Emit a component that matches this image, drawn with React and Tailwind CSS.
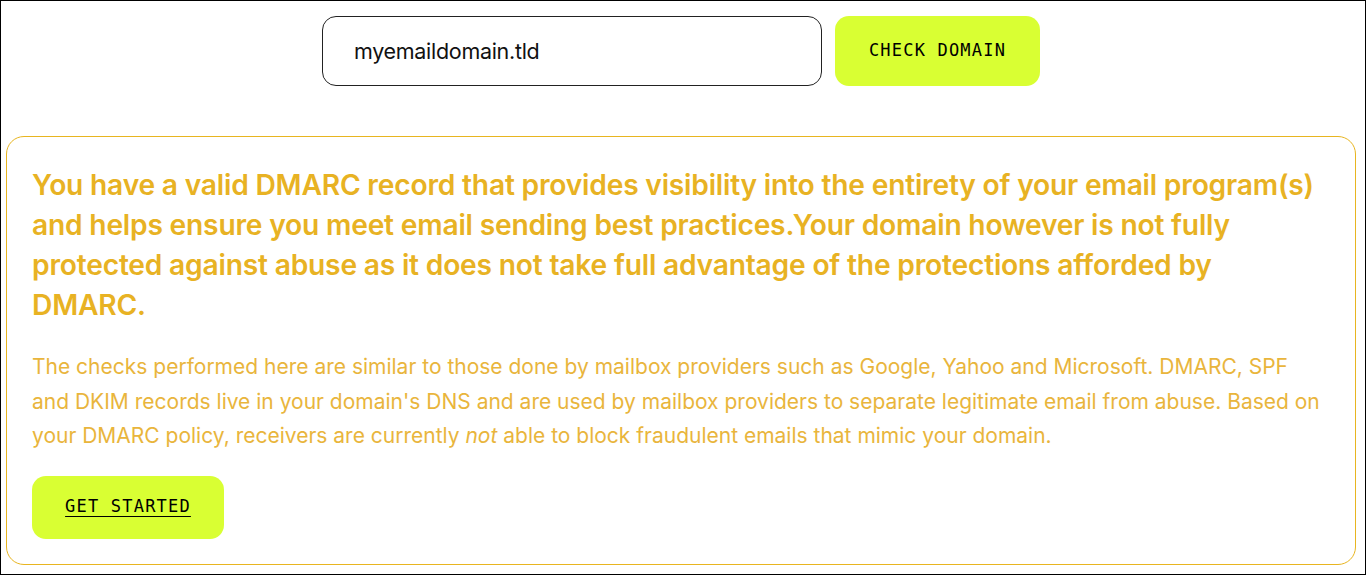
export default function App() {
    return (
        <div className="w-[1366px] h-[575px] border border-black bg-white font-['Inter','Noto_Sans',sans-serif] overflow-hidden">

            {/* domain check row */}
            <div className="flex justify-center gap-[13px] pt-[15px] pr-[4px]">
                <div className="w-[500px] h-[70px] border border-[#222] rounded-[14px] flex items-center pl-[31px] text-[21.5px] text-[#111] tracking-[-0.3px]">
                    myemaildomain.tld
                </div>
                <button className="w-[205px] h-[70px] bg-[#d9ff33] rounded-[14px] font-['DejaVu_Sans_Mono',monospace] text-[17px] tracking-[1.2px] text-black">
                    CHECK DOMAIN
                </button>
            </div>

            {/* result card */}
            <div className="mt-[50px] ml-[5px] w-[1350px] h-[429px] border border-[#e8b520] rounded-[18px] pl-[25px] pr-[25px] pt-[28px] text-[#e8b223]">
                <h1 className="text-[28.2px] leading-[40px] font-semibold tracking-[-0.2px]">
                    You have a valid DMARC record that provides visibility into the entirety of your email program(s) and helps ensure you meet email sending best practices.Your domain however is not fully protected against abuse as it does not take full advantage of the protections afforded by DMARC.
                </h1>
                <p className="mt-[25px] text-[21px] leading-[34.5px] text-[#e9b53c]">
                    The checks performed here are similar to those done by mailbox providers such as Google, Yahoo and Microsoft. DMARC, SPF and DKIM records live in your domain's DNS and are used by mailbox providers to separate legitimate email from abuse. Based on your DMARC policy, receivers are currently <em>not</em> able to block fraudulent emails that mimic your domain.
                </p>
                <button className="mt-[22px] w-[192px] h-[63px] bg-[#d9ff33] rounded-[14px] font-['DejaVu_Sans_Mono',monospace] text-[17px] tracking-[1.2px] text-black underline underline-offset-[4px]">
                    GET STARTED
                </button>
            </div>
        </div>
    );
}
